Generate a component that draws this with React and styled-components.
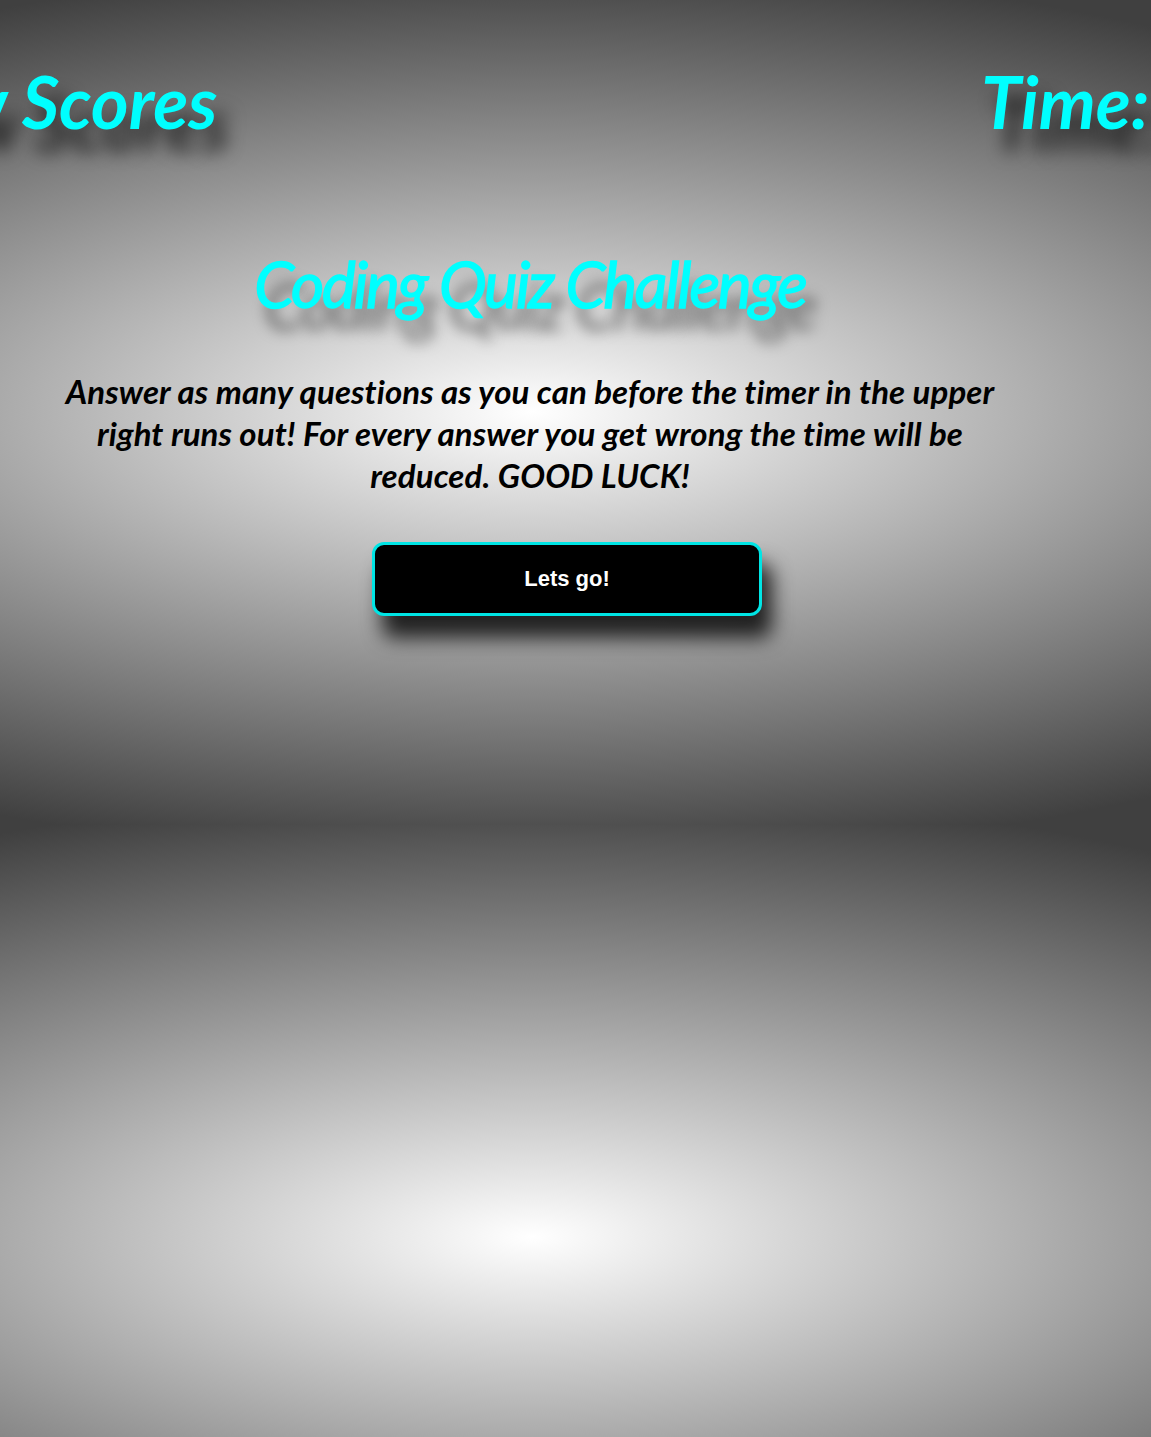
import styled, { createGlobalStyle } from "styled-components";

const GlobalStyle = createGlobalStyle`
  html {
    min-height: 100%;
    background-color: #404040;
    background-image: radial-gradient(ellipse 1200px 450px at 532px 412px, #ffffff, #404040);
    background-size: 100% 825px;
    background-repeat: repeat;
  }

  body {
    margin: 0;
    font-family: "Lato", "Open Sans", sans-serif;
  }
`;

const Page = styled.div`
  overflow: hidden;
  min-height: 825px;
`;

const Header = styled.header`
  display: flex;
  justify-content: space-between;
  align-items: center;
  margin: 0 -56px 0 -145px;
  padding-top: 58px;
  white-space: nowrap;
`;

const HeaderLink = styled.h2`
  margin: 0;
  font-size: 72px;
  font-style: italic;
  font-weight: 700;
  color: #00ffff;
  text-shadow: 12px 22px 18px rgba(0, 0, 0, 0.75);
`;

const Main = styled.main`
  width: 1060px;
  display: flex;
  flex-direction: column;
  align-items: center;
  text-align: center;
`;

const Title = styled.h1`
  margin: 101px 0 0;
  font-size: 64px;
  font-style: italic;
  font-weight: 400;
  letter-spacing: -2.3px;
  color: #00ffff;
  -webkit-text-stroke: 1.4px #00ffff;
  text-shadow: 10px 22px 14px rgba(0, 0, 0, 0.55);
`;

const Intro = styled.p`
  width: 960px;
  margin: 48px 0 0;
  font-size: 33px;
  line-height: 42px;
  font-style: italic;
  font-weight: 700;
  letter-spacing: 0.1px;
  color: #000;
`;

const StartButton = styled.button`
  width: 390px;
  height: 74px;
  margin: 46px 0 0 74px;
  background: #000;
  border: 3px solid #00e5e5;
  border-radius: 12px;
  color: #fff;
  font-family: "Liberation Sans", Arial, sans-serif;
  font-size: 22px;
  font-weight: 700;
  box-shadow: 10px 22px 20px rgba(0, 0, 0, 0.8);
  cursor: pointer;
`;

export default function App() {
  return (
    <Page>
      <GlobalStyle />
      <Header>
        <HeaderLink>View Scores</HeaderLink>
        <HeaderLink>Time: 0</HeaderLink>
      </Header>
      <Main>
        <Title>Coding Quiz Challenge</Title>
        <Intro>
          Answer as many questions as you can before the timer in the upper
          right runs out! For every answer you get wrong the time will be
          reduced. GOOD LUCK!
        </Intro>
        <StartButton>Lets go!</StartButton>
      </Main>
    </Page>
  );
}
